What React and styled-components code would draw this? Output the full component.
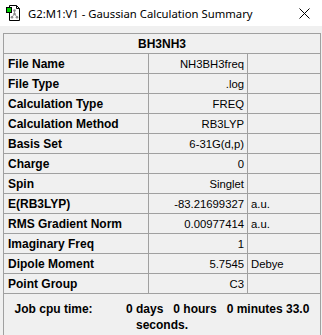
import React from 'react';
import styled, { createGlobalStyle } from 'styled-components';

const GlobalStyle = createGlobalStyle`
  html, body {
    margin: 0;
    padding: 0;
    background: #f0f0f0;
  }
  body {
    width: 322px;
    height: 335px;
    overflow: hidden;
  }
`;

const Window = styled.div`
  width: 322px;
  height: 335px;
  background: #f0f0f0;
  display: flex;
  flex-direction: column;
`;

const TitleBar = styled.div`
  height: 26px;
  background: #ffffff;
  display: flex;
  align-items: center;
  padding-left: 6px;
  font-family: "Noto Sans", "Open Sans", sans-serif;
  font-size: 11.3px;
  color: #000;
`;

const Title = styled.span`
  margin-left: 8px;
  flex: 1;
  white-space: nowrap;
`;

const CloseButton = styled.div`
  width: 36px;
  height: 26px;
  display: flex;
  align-items: center;
  justify-content: center;
`;

const Body = styled.div`
  padding: 7px 1px 0 3px;
  flex: 1;
`;

const Frame = styled.div`
  border: 1px solid #a0a0a0;
  border-bottom: none;
  height: 302px;
  font-family: "Liberation Sans", Arial, sans-serif;
  font-size: 11px;
  color: #000;
`;

const Grid = styled.div`
  display: grid;
  grid-template-columns: 145px 99px 1fr;
`;

const Header = styled.div`
  grid-column: 1 / -1;
  height: 19px;
  border-bottom: 1px solid #a0a0a0;
  display: flex;
  align-items: center;
  justify-content: center;
  font-weight: bold;
  font-size: 12px;
`;

const Cell = styled.div`
  height: 19px;
  border-bottom: 1px solid #a0a0a0;
  border-right: ${(p) => (p.$last ? 'none' : '1px solid #a0a0a0')};
  display: flex;
  align-items: center;
  justify-content: ${(p) => (p.$align === 'right' ? 'flex-end' : 'flex-start')};
  padding: ${(p) => (p.$align === 'right' ? '0 3px 0 0' : p.$unit ? '0 0 0 3px' : '0 0 0 4px')};
  font-weight: ${(p) => (p.$bold ? 'bold' : 'normal')};
  font-size: ${(p) => (p.$bold ? '12px' : '11.3px')};
  white-space: nowrap;
  overflow: hidden;
`;

const Footer = styled.div`
  padding: 7px 0 0 0;
  text-align: center;
  font-weight: bold;
  font-size: 12px;
  line-height: 16px;
  white-space: pre-wrap;
`;

const rows = [
  ['File Name', 'NH3BH3freq', ''],
  ['File Type', '.log', ''],
  ['Calculation Type', 'FREQ', ''],
  ['Calculation Method', 'RB3LYP', ''],
  ['Basis Set', '6-31G(d,p)', ''],
  ['Charge', '0', ''],
  ['Spin', 'Singlet', ''],
  ['E(RB3LYP)', '-83.21699327', 'a.u.'],
  ['RMS Gradient Norm', '0.00977414', 'a.u.'],
  ['Imaginary Freq', '1', ''],
  ['Dipole Moment', '5.7545', 'Debye'],
  ['Point Group', 'C3', ''],
];

const AppIcon = () => (
  <svg width="14" height="16" viewBox="0 0 14 16">
    <path d="M3.5 0.5 H10.5 L13.5 3.5 V15.5 H3.5 Z" fill="#fff" stroke="#000" />
    <path d="M10.5 0.5 V3.5 H13.5" fill="none" stroke="#000" />
    <line x1="8.5" y1="5.5" x2="8.5" y2="9" stroke="#999" />
    <line x1="8.5" y1="9" x2="6" y2="12" stroke="#999" />
    <line x1="8.5" y1="9" x2="11" y2="12" stroke="#999" />
    <circle cx="8.5" cy="5.5" r="1.3" fill="#8a8a8a" />
    <circle cx="8.5" cy="9" r="1.3" fill="#8a8a8a" />
    <circle cx="6" cy="12.3" r="1.3" fill="#8a8a8a" />
    <circle cx="11" cy="12.3" r="1.3" fill="#8a8a8a" />
    <rect x="0.5" y="2.5" width="5" height="5" fill="#00d000" stroke="#000" />
  </svg>
);

const CloseIcon = () => (
  <svg width="11" height="11" viewBox="0 0 11 11">
    <path d="M0.5 0.5 L10.5 10.5 M10.5 0.5 L0.5 10.5" stroke="#000" strokeWidth="1" />
  </svg>
);

export default function App() {
  return (
    <>
      <GlobalStyle />
      <Window>
        <TitleBar>
          <AppIcon />
          <Title>G2:M1:V1 - Gaussian Calculation Summary</Title>
          <CloseButton>
            <CloseIcon />
          </CloseButton>
        </TitleBar>
        <Body>
          <Frame>
            <Grid>
              <Header>BH3NH3</Header>
              {rows.map(([label, value, unit]) => (
                <React.Fragment key={label}>
                  <Cell $bold>{label}</Cell>
                  <Cell $align="right">{value}</Cell>
                  <Cell $last $unit>{unit}</Cell>
                </React.Fragment>
              ))}
            </Grid>
            <Footer>{'Job cpu time:          0 days   0 hours   0 minutes 33.0 seconds.'}</Footer>
          </Frame>
        </Body>
      </Window>
    </>
  );
}
